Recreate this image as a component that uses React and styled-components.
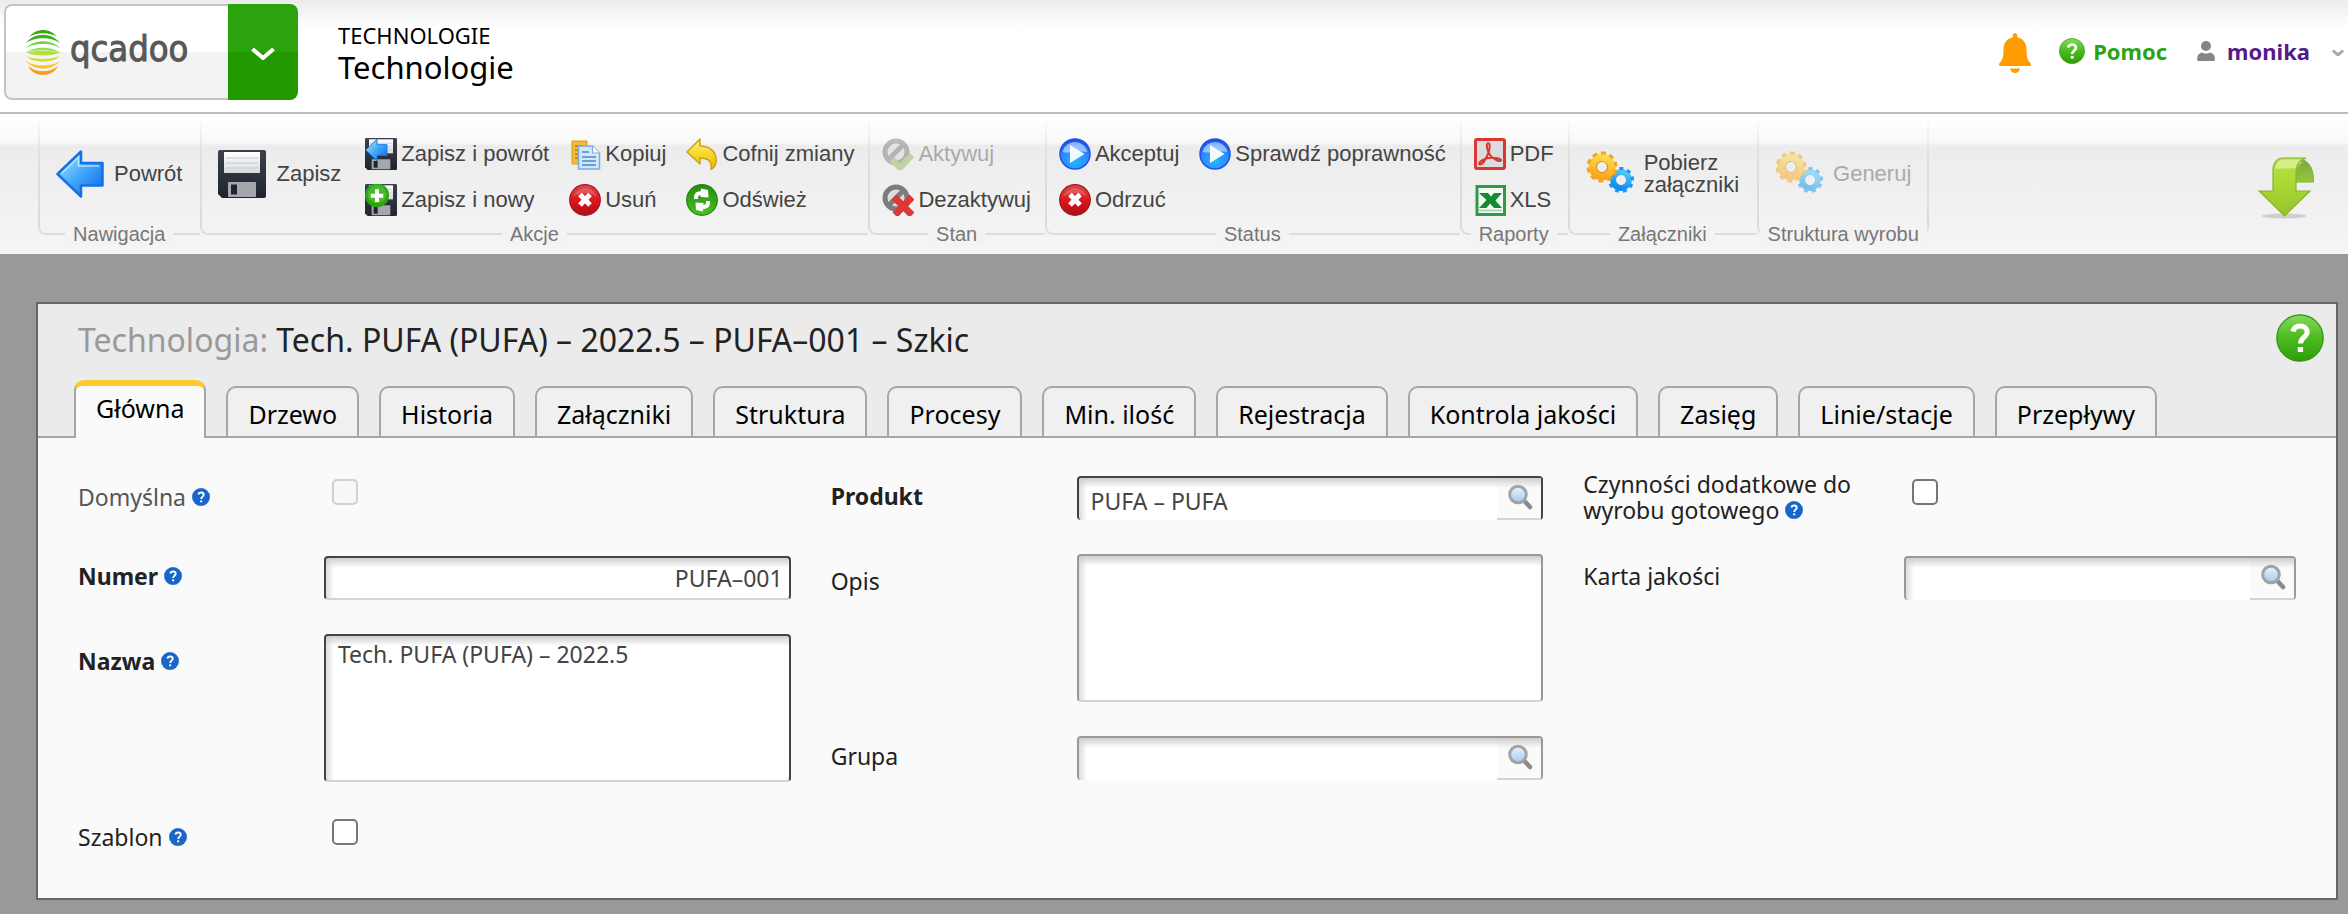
import React from "react";
import styled, { createGlobalStyle, css } from "styled-components";

const GlobalStyle = createGlobalStyle`
  *, *::before, *::after { box-sizing: border-box; }
  body {
    margin: 0;
    background: #999;
    font-family: "Noto Sans", "Open Sans", sans-serif;
    font-size: 22px;
    color: #222;
  }
  button, input, textarea { font: inherit; color: inherit; margin: 0; }
  svg { display: block; flex: none; }
`;

/* ---------- Icons ---------- */

const Hidden = styled.svg`
  position: absolute;
  width: 0;
  height: 0;
`;

const Gradient = ({ id, stops }) => (
  <linearGradient id={id} x1="0" y1="0" x2="0" y2="1">
    {stops.map((c, i) => (
      <stop key={i} offset={i / (stops.length - 1)} stopColor={c} />
    ))}
  </linearGradient>
);

const IconDefs = () => (
  <Hidden aria-hidden="true">
    <defs>
      <linearGradient id="arrowBlue" x1="0" y1="0" x2="1" y2="1">
        <stop offset="0" stopColor="#b5ecff" />
        <stop offset="0.5" stopColor="#43a9fb" />
        <stop offset="1" stopColor="#0a5fe6" />
      </linearGradient>
      <radialGradient id="playBlue" cx="0.5" cy="0.75" r="0.75">
        <stop offset="0" stopColor="#23b4ff" />
        <stop offset="0.6" stopColor="#2c8bff" />
        <stop offset="1" stopColor="#1748e8" />
      </radialGradient>
      <Gradient id="discDark" stops={["#3b414d", "#20242d"]} />
      <Gradient id="discPaper" stops={["#ffffff", "#d8dadd"]} />
      <Gradient id="ballGreen" stops={["#86d95f", "#4cbb1f", "#2f9b0c"]} />
      <Gradient id="ballRed" stops={["#d9474c", "#e0161c", "#a90e17"]} />
      <Gradient id="ballRefresh" stops={["#2c8a14", "#37a51b", "#46c41f"]} />
      <Gradient id="undoYellow" stops={["#fff27a", "#f7d92b", "#e3b010"]} />
      <Gradient id="glass" stops={["#e8f4ff", "#9fcbf5"]} />
      <Gradient id="gearGold" stops={["#ffd84a", "#fca61c"]} />
      <Gradient id="gearBlue" stops={["#4fc4f6", "#0c8cf0"]} />
      <Gradient id="arrowLime" stops={["#b7e14a", "#a9d733", "#97c22c"]} />
      <Gradient id="arrowLimeDark" stops={["#7aa53e", "#94c93c"]} />
    </defs>
  </Hidden>
);

const QcadooMark = () => (
  <svg width="34" height="46" viewBox="0 0 34 46" fill="none" strokeLinecap="butt">
    <path d="M3 8C10-1.500 24-1.500 31 8 24 3 10 3 3 8Z" fill="#3aa816" />
    <path d="M0 14C8 3 26 3 34 14 26 7.500 8 7.500 0 14Z" fill="#3fae1d" />
    <path d="M0 19C8 10 26 10 34 19 26 13.500 8 13.500 0 19Z" fill="#6fd349" />
    <path d="M0 23.500C8 17 26 17 34 23.500 26 20.500 8 20.500 0 23.500Z" fill="#93df4a" />
    <path d="M0 23.500C8 27.500 26 27.500 34 23.500 26 21 8 21 0 23.500Z" fill="#b4e03c" />
    <path d="M0 27C8 34.500 26 34.500 34 27 26 31 8 31 0 27Z" fill="#d4d92a" />
    <path d="M0 32C8 42 26 42 34 32 26 38 8 38 0 32Z" fill="#fbc418" />
    <path d="M2 37C8 49 26 49 32 37 24 44 10 44 2 37Z" fill="#fb9a1c" />
  </svg>
);

const Chevron = ({ size = 24, color = "#fff", width = 4 }) => (
  <svg width={size} height={size / 2} viewBox="0 0 24 12" fill="none" stroke={color} strokeWidth={width}>
    <path d="M1.500 1 12 10 22.500 1" />
  </svg>
);

const BellIcon = () => (
  <svg width="32" height="40" viewBox="0 0 32 40" fill="#ff9c00">
    <path d="M16 0c1.300 0 2.200 1 2.200 2.200v2C24 5.500 27.500 10 27.500 16c0 8 .8 11 3.800 14 1.300 1.400.7 3-1 3H1.700c-1.700 0-2.300-1.600-1-3 3-3 3.800-6 3.800-14C4.500 10 8 5.500 13.800 4.200v-2C13.800 1 14.700 0 16 0Z" />
    <path d="M11 35.500h10c-.6 2.600-2.400 4.500-5 4.500s-4.400-1.900-5-4.500Z" />
  </svg>
);

const BallHelp = ({ size, fill = "url(#ballGreen)", rim = "#2e9612" }) => (
  <svg width={size} height={size} viewBox="0 0 48 48">
    <circle cx="24" cy="24" r="23.200" fill={fill} stroke={rim} strokeWidth="1.200" />
    <path
      d="M17 17.500c1-4 4-5.500 7.200-5.500 4 0 7 2.200 7 6 0 5-6.700 5.400-6.700 11.500"
      fill="none"
      stroke="#fff"
      strokeWidth="5"
    />
    <rect x="21.700" y="33" width="5.400" height="5" fill="#fff" />
  </svg>
);

const PersonIcon = () => (
  <svg width="18" height="20" viewBox="0 0 18 20" fill="#858585">
    <circle cx="9" cy="5" r="5" />
    <path d="M1 20C-.3 20 0 15 1.500 13.500 2.500 12.200 4 12 5 11.500c2 1.300 6 1.300 8 0 1 .5 2.500.7 3.500 2C18 15 18.300 20 17 20Z" />
  </svg>
);

const BackArrowIcon = () => (
  <svg width="48" height="48" viewBox="0 0 48 48">
    <path d="M1.500 24 25 1.500V13H46.500V35.500H25V46.500Z" fill="url(#arrowBlue)" stroke="#1470ec" strokeWidth="2.500" strokeLinejoin="round" />
    <path d="M5.500 23.500 22.500 7V16H43" fill="none" stroke="#c3f0ff" strokeWidth="1.500" opacity=".8" />
  </svg>
);

const Disc = () => (
  <>
    <path d="M2 0H46a2 2 0 0 1 2 2V46a2 2 0 0 1-2 2H4L0 44V2A2 2 0 0 1 2 0Z" fill="url(#discDark)" />
    <rect x="6" y="2" width="36" height="21" fill="url(#discPaper)" />
    <path d="M8 8H40M8 13H40M8 18H40" stroke="#c6c8cc" strokeWidth="1" />
    <rect x="10" y="32" width="28" height="15" rx="1" fill="#a5a7ac" />
    <rect x="13" y="34.500" width="6" height="10" fill="#20242d" />
  </>
);

const DiscIcon = () => (
  <svg width="48" height="48" viewBox="0 0 48 48">
    <Disc />
  </svg>
);

const DiscBackIcon = () => (
  <svg width="32" height="32" viewBox="0 0 48 48">
    <Disc />
    <path d="M1 18 18 2V10H33V26H18V34Z" fill="url(#arrowBlue)" stroke="#1a7fe8" strokeWidth="1.500" />
  </svg>
);

const DiscNewIcon = () => (
  <svg width="32" height="32" viewBox="0 0 48 48">
    <Disc />
    <circle cx="18" cy="17" r="18" fill="#2ca514" />
    <circle cx="18" cy="15" r="14" fill="#5cc63a" opacity=".6" />
    <path d="M18 8V27M8.500 17.500H27.500" stroke="#fff" strokeWidth="6" />
  </svg>
);

const CopyIcon = () => (
  <svg width="32" height="32" viewBox="0 0 32 32">
    <path d="M3 3H18V26H3Z" fill="#f3bc34" stroke="#d99b1d" />
    <path d="M6 8H14M6 12H12M6 16H12M6 20H12" stroke="#b97b10" strokeWidth="1.500" />
    <path d="M9.500 8H23.500L30.500 15V31H9.500Z" fill="#d3e7fa" stroke="#78acdf" strokeWidth="1.500" />
    <path d="M23.500 8V15H30.500" fill="#fff" stroke="#78acdf" strokeWidth="1.200" />
    <path d="M13 14H20M13 19H27M13 23H27M13 27H27" stroke="#6e9fd2" strokeWidth="1.800" />
  </svg>
);

const DeleteIcon = () => (
  <svg width="32" height="32" viewBox="0 0 32 32">
    <circle cx="16" cy="16" r="15.300" fill="url(#ballRed)" stroke="#9a1c22" strokeWidth="1.200" />
    <path d="M4 13a12.500 12.500 0 0 1 24 0C22 8 10 8 4 13Z" fill="#fff" opacity=".18" />
    <path d="M11 10.500 21 21M21 10.500 11 21" stroke="#fff" strokeWidth="5" />
  </svg>
);

const UndoIcon = () => (
  <svg width="32" height="32" viewBox="0 0 32 32">
    <path
      d="M1 14 14 1V8C25 8 31 15 30 24 29.500 28 28 30 25 31.500 26 24 23 20 14 20V26Z"
      fill="url(#undoYellow)"
      stroke="#cf9f16"
      strokeWidth="1.500"
      strokeLinejoin="round"
    />
  </svg>
);

const RefreshIcon = () => (
  <svg width="32" height="32" viewBox="0 0 32 32">
    <circle cx="16" cy="16" r="15.300" fill="url(#ballRefresh)" stroke="#23840f" strokeWidth="1.200" />
    <path d="M10 15V13C10 10.500 12 9 16 9M22 17V19C22 21.500 20 23 16 23" fill="none" stroke="#fff" strokeWidth="4" />
    <path d="M15 4.500 22 6 22.500 13.500 14.500 13ZM17 27.500 10 26 9.500 18.500 17.500 19Z" fill="#fff" />
  </svg>
);

const Forbidden = () => (
  <>
    <circle cx="14" cy="14" r="11" fill="#dcdcdc" stroke="#7c7c7c" strokeWidth="5" />
    <path d="M6.500 21.500 21.500 6.500" stroke="#7c7c7c" strokeWidth="5" />
  </>
);

const ActivateIcon = () => (
  <svg width="32" height="32" viewBox="0 0 32 32" opacity=".5">
    <Forbidden />
    <path d="M10 21 18 30 30 17" fill="none" stroke="#8fbe5a" strokeWidth="6" />
  </svg>
);

const DeactivateIcon = () => (
  <svg width="32" height="32" viewBox="0 0 32 32">
    <Forbidden />
    <path d="M12 13 30 31M30 13 13 31" stroke="#dd3835" strokeWidth="7" />
  </svg>
);

const PlayIcon = () => (
  <svg width="32" height="32" viewBox="0 0 32 32">
    <circle cx="16" cy="16" r="15" fill="url(#playBlue)" stroke="#2350ea" strokeWidth="1.500" />
    <path d="M3.500 14a12.800 12.800 0 0 1 25 0C21 12 11 16 3.500 14Z" fill="#fff" opacity=".5" />
    <path d="M11 7 25.500 16 11 25Z" fill="#f4fbff" />
  </svg>
);

const PdfIcon = () => (
  <svg width="32" height="32" viewBox="0 0 32 32">
    <rect x="1.500" y="1.500" width="29" height="29" rx="1.500" fill="#dcdcdc" stroke="#d9372f" strokeWidth="3" />
    <path
      d="M13.500 5.500C16 4.500 16.500 9 14.500 15 12 21 8 27 5.500 26.500 3.500 25 9 20.500 15 20 21 19.500 27.500 20.500 27 22.500 26 24.500 19 21 16 17 13 12 12 7 13.500 5.500Z"
      fill="none"
      stroke="#d9372f"
      strokeWidth="2"
    />
  </svg>
);

const XlsIcon = () => (
  <svg width="32" height="32" viewBox="0 0 32 32">
    <rect x="3" y="2.500" width="27.500" height="28" fill="#f4faf4" stroke="#2f9a48" strokeWidth="3" />
    <path d="M5 9H14L17 12.500 20 9H28L21.500 16.500 28 24H20L16 19.500 12.500 24H5L12.500 16Z" fill="#158a35" />
    <path d="M5 26.500H28" stroke="#9dcfa6" strokeWidth="1.500" />
  </svg>
);

const GearsIcon = ({ faded }) => (
  <svg width="48" height="48" viewBox="0 0 48 48" opacity={faded ? 0.5 : 1}>
    <g transform="translate(35 30) rotate(20)">
      <circle r="8" fill="none" stroke="url(#gearBlue)" strokeWidth="6" />
      <circle r="11.500" fill="none" stroke="#1b96ee" strokeWidth="3" strokeDasharray="4 4.030" />
    </g>
    <g transform="translate(16 17) rotate(12)">
      <circle r="9.500" fill="none" stroke="url(#gearGold)" strokeWidth="8" />
      <circle r="14" fill="none" stroke="#f3a51d" strokeWidth="3" strokeDasharray="4.800 4" />
      <circle r="5.500" fill="none" stroke="#cf8d1c" strokeWidth="1" />
    </g>
  </svg>
);

const CollapseIcon = () => (
  <svg width="56" height="62" viewBox="0 0 56 62">
    <ellipse cx="26" cy="59" rx="22" ry="2.500" fill="#000" opacity=".14" />
    <path d="M30 3C48-2 56 8 55.500 25H38C38 14 40 6 46 5Z" fill="url(#arrowLimeDark)" stroke="#86b32e" />
    <path
      d="M1 34H15V14C15 6 19 1 25 1H48C41 3 38 9 38 16V34H52L26.500 59Z"
      fill="url(#arrowLime)"
      stroke="#86b32e"
      strokeWidth="1.200"
    />
    <path d="M17 12C18 6 21 3 25 2.500H44C40 4 38 8 37.500 11Z" fill="#e2f6a6" opacity=".7" />
  </svg>
);

const SearchIcon = () => (
  <svg width="26" height="26" viewBox="0 0 26 26">
    <path d="M16.500 16 23 23" stroke="#8a8a8a" strokeWidth="4.500" strokeLinecap="round" />
    <circle cx="11" cy="10.500" r="8.300" fill="url(#glass)" stroke="#a3a3a3" strokeWidth="3" />
  </svg>
);

/* ---------- Top bar ---------- */

const TopBar = styled.header`
  display: flex;
  align-items: flex-start;
  min-height: 114px;
  padding: 4px 4px 0;
  border-bottom: 2px solid #bbb;
  background: linear-gradient(#ececec, #fff 28px);
`;

const Brand = styled.div`
  display: flex;
  height: 96px;
`;

const BrandLink = styled.a`
  display: flex;
  align-items: center;
  width: 224px;
  padding-left: 20px;
  gap: 10px;
  border: 2px solid #c4c4c4;
  border-right: 0;
  border-radius: 8px 0 0 8px;
  background: linear-gradient(#fff 50%, #f3f3f3 50%);
  color: #585858;
  font-family: "DejaVu Sans Condensed", "DejaVu Sans", sans-serif;
  font-size: 36px;
  line-height: 44px;
  text-decoration: none;
`;

const BrandName = styled.span`
  padding-bottom: 6px;
  -webkit-text-stroke: 1px #585858;
`;

const MenuToggle = styled.button`
  display: flex;
  align-items: center;
  justify-content: center;
  width: 70px;
  padding: 4px 0 0;
  border: 0;
  border-radius: 0 8px 8px 0;
  background: linear-gradient(#2aa30c 50%, #219a02 50%);
`;

const PageHeading = styled.div`
  margin-left: 40px;
  padding-top: 18px;
  color: #000;
`;

const Breadcrumb = styled.div`
  font-size: 22px;
  line-height: 26px;
`;

const PageTitle = styled.h1`
  margin: 0;
  font-size: 31px;
  font-weight: 400;
  line-height: 38px;
`;

const UserArea = styled.nav`
  display: flex;
  align-items: center;
  margin-left: auto;
  height: 96px;
  padding-top: 2px;
`;

const BellButton = styled.button`
  margin-right: 28px;
  padding: 0;
  border: 0;
  background: none;
`;

const UserLink = styled.a`
  display: flex;
  align-items: center;
  gap: ${(p) => p.$gap || 8}px;
  margin-right: ${(p) => p.$after || 0}px;
  padding-bottom: 4px;
  color: ${(p) => p.$color};
  font-weight: 700;
  line-height: 30px;
  text-decoration: none;
`;

/* ---------- Ribbon ---------- */

const RibbonBar = styled.div`
  display: flex;
  min-height: 140px;
  padding: 0 34px 0 38px;
  background: linear-gradient(#fff, #f9f9f9 28px, #ececec 32px, #f5f5f5);
  font-family: "Liberation Sans", Arial, sans-serif;
`;

const Group = styled.section`
  position: relative;
  display: flex;
  flex-direction: column;
  align-items: center;
  padding: 24px 14px 9px;

  &::before {
    content: "";
    position: absolute;
    inset: 4px 0 19px;
    border: solid #dcdcdc;
    border-width: 0 0 2px 2px;
    border-radius: 0 0 0 8px;
    mask-image: linear-gradient(transparent, #000 50px);
    pointer-events: none;
  }

  &:last-of-type::before {
    border-right-width: 2px;
    border-radius: 0 0 8px 8px;
  }
`;

const GroupBody = styled.div`
  display: flex;
  flex: 1;
  gap: 20px;
`;

const GroupCaption = styled.div`
  position: relative;
  margin: 0 -12px;
  padding: 0 8px;
  background: #f3f3f3;
  color: #777;
  font-size: 20px;
  line-height: 22px;
  white-space: nowrap;
`;

const ItemColumn = styled.div`
  display: flex;
  flex-direction: column;
  gap: 14px;
`;

const SmallButton = styled.button`
  display: flex;
  align-items: center;
  gap: 4px;
  height: 32px;
  padding: 0;
  border: 0;
  background: none;
  color: #444;
  line-height: 32px;
  white-space: nowrap;
  &:disabled { color: #aaa; }
`;

const LargeButton = styled(SmallButton)`
  gap: 10px;
  height: 72px;
  padding: 0 4px;
  line-height: 22px;
  text-align: left;
  white-space: pre-line;
`;

const CollapseButton = styled.button`
  align-self: flex-start;
  margin: 43px 0 0 auto;
  padding: 0;
  border: 0;
  background: none;
`;

const ribbon = [
  { caption: "Nawigacja", large: { text: "Powrót", icon: <BackArrowIcon /> } },
  {
    caption: "Akcje",
    large: { text: "Zapisz", icon: <DiscIcon /> },
    columns: [
      [
        { text: "Zapisz i powrót", icon: <DiscBackIcon /> },
        { text: "Zapisz i nowy", icon: <DiscNewIcon /> },
      ],
      [
        { text: "Kopiuj", icon: <CopyIcon /> },
        { text: "Usuń", icon: <DeleteIcon /> },
      ],
      [
        { text: "Cofnij zmiany", icon: <UndoIcon /> },
        { text: "Odśwież", icon: <RefreshIcon /> },
      ],
    ],
  },
  {
    caption: "Stan",
    columns: [
      [
        { text: "Aktywuj", icon: <ActivateIcon />, disabled: true },
        { text: "Dezaktywuj", icon: <DeactivateIcon /> },
      ],
    ],
  },
  {
    caption: "Status",
    columns: [
      [
        { text: "Akceptuj", icon: <PlayIcon /> },
        { text: "Odrzuć", icon: <DeleteIcon /> },
      ],
      [{ text: "Sprawdź poprawność", icon: <PlayIcon /> }],
    ],
  },
  {
    caption: "Raporty",
    columns: [
      [
        { text: "PDF", icon: <PdfIcon /> },
        { text: "XLS", icon: <XlsIcon /> },
      ],
    ],
  },
  { caption: "Załączniki", large: { text: "Pobierz\nzałączniki", icon: <GearsIcon /> } },
  { caption: "Struktura wyrobu", large: { text: "Generuj", icon: <GearsIcon faded />, disabled: true } },
];

const Ribbon = () => (
  <RibbonBar>
    {ribbon.map(({ caption, large, columns = [] }) => (
      <Group key={caption}>
        <GroupBody>
          {large && (
            <LargeButton type="button" disabled={large.disabled}>
              {large.icon}
              {large.text}
            </LargeButton>
          )}
          {columns.map((items, i) => (
            <ItemColumn key={i}>
              {items.map((item) => (
                <SmallButton key={item.text} type="button" disabled={item.disabled}>
                  {item.icon}
                  {item.text}
                </SmallButton>
              ))}
            </ItemColumn>
          ))}
        </GroupBody>
        <GroupCaption>{caption}</GroupCaption>
      </Group>
    ))}
    <CollapseButton type="button" aria-label="Zwiń">
      <CollapseIcon />
    </CollapseButton>
  </RibbonBar>
);

/* ---------- Window panel ---------- */

const Workspace = styled.main`
  padding: 48px 10px 14px 36px;
`;

const Panel = styled.div`
  border: 2px solid #666;
  background: #fafafa;
`;

const PanelHead = styled.div`
  display: flex;
  flex-direction: column;
  border-bottom: 2px solid #a6a6a6;
  background: #ebebeb;
`;

const TitleRow = styled.div`
  display: flex;
  align-items: flex-start;
  justify-content: space-between;
  padding: 10px 12px 0 40px;
  min-height: 76px;
`;

const RecordTitle = styled.h2`
  margin: 6px 0 0;
  font-size: 32px;
  font-weight: 400;
  line-height: 40px;
`;

const Muted = styled.span`
  color: #999;
`;

const HelpButton = styled.button`
  padding: 0;
  border: 0;
  background: none;
`;

const Tabs = styled.div`
  display: flex;
  align-items: flex-end;
  gap: 20px;
  margin-bottom: -2px;
  padding-left: 36px;
`;

const Tab = styled.button`
  height: 52px;
  padding: 4px 20px 0;
  border: 2px solid #a6a6a6;
  border-radius: 10px 10px 0 0;
  background: #f0f0f0;
  color: #000;
  font-size: 25px;
  line-height: 34px;
  white-space: nowrap;

  ${(p) =>
    p.$active &&
    css`
      height: 58px;
      padding: 0 20px 8px;
      border-top: 6px solid #ffca30;
      border-bottom: 0;
      background: #fafafa;
    `}
`;

const tabs = [
  "Główna", "Drzewo", "Historia", "Załączniki", "Struktura", "Procesy",
  "Min. ilość", "Rejestracja", "Kontrola jakości", "Zasięg", "Linie/stacje", "Przepływy",
];

/* ---------- Form ---------- */

const FormGrid = styled.form`
  display: grid;
  grid-template-columns: repeat(3, minmax(0, 1fr));
  gap: 40px;
  padding: 38px 40px 36px;
  font-size: 23px;
`;

const FormColumn = styled.div`
  display: flex;
  flex-direction: column;
  gap: 34px;
`;

const FieldRow = styled.div`
  display: grid;
  grid-template-columns: ${(p) => p.$columns || "246fr 467fr"};
  grid-template-rows: ${(p) => (p.$check ? "46px" : "auto")};
  align-items: ${(p) => (p.$tall ? "start" : "center")};
`;

const Label = styled.label`
  padding-top: ${(p) => (p.$tall ? 14 : 0)}px;
  padding-bottom: 4px;
  color: ${(p) => (p.$muted ? "#555" : "#222")};
  font-weight: ${(p) => (p.$required ? 700 : 400)};
  line-height: 26px;
`;

const Hint = styled.span`
  display: inline-block;
  margin-left: 6px;
`;

const fieldFrame = css`
  border: 2px solid ${(p) => (p.$required ? "#444" : "#999")};
  border-radius: 4px;
  background:
    linear-gradient(#cfcfcf, transparent) top / 100% 10px no-repeat,
    linear-gradient(90deg, #ddd, transparent) left / 8px 100% no-repeat,
    #fff;
`;

const TextInput = styled.input`
  ${fieldFrame}
  width: 100%;
  min-width: 0;
  height: 44px;
  padding: 0 6px;
  border-bottom-color: #d4d4d4;
  color: #444;
  text-align: right;
`;

const TextArea = styled.textarea`
  ${fieldFrame}
  display: block;
  width: 100%;
  height: 148px;
  padding: 4px 12px;
  border-bottom-color: #d4d4d4;
  color: #444;
  line-height: 28px;
  resize: none;
`;

const LookupFrame = styled.div`
  ${fieldFrame}
  display: flex;
  height: 44px;
  border-bottom: 0;
`;

const LookupInput = styled.input`
  flex: 1;
  min-width: 0;
  padding: 4px 0 0 12px;
  border: 0;
  background: none;
  color: #444;
`;

const LookupButton = styled.button`
  display: flex;
  align-items: center;
  justify-content: center;
  width: 44px;
  padding: 0 0 2px 2px;
  border: 0;
  border-bottom: 2px solid #d4d4d4;
  background: linear-gradient(#cfcfcf, #fafafa 10px);
`;

const Checkbox = styled.input`
  appearance: none;
  width: 26px;
  height: 26px;
  margin: 0 0 14px 8px;
  border: 2px solid #767676;
  border-radius: 5px;
  background: #fff;
  &:disabled { border-color: #d0d0d0; background: #f8f8f8; }
`;

const fields = [
  [
    { id: "domyslna", label: "Domyślna", type: "check", hint: true, disabled: true },
    { id: "numer", label: "Numer", type: "text", hint: true, required: true, value: "PUFA–001" },
    { id: "nazwa", label: "Nazwa", type: "area", hint: true, required: true, value: "Tech. PUFA (PUFA) – 2022.5" },
    { id: "szablon", label: "Szablon", type: "check", hint: true },
  ],
  [
    { id: "produkt", label: "Produkt", type: "lookup", required: true, value: "PUFA – PUFA" },
    { id: "opis", label: "Opis", type: "area" },
    { id: "grupa", label: "Grupa", type: "lookup" },
  ],
  [
    { id: "czynnosci", label: "Czynności dodatkowe do wyrobu gotowego", type: "check", hint: true },
    { id: "karta", label: "Karta jakości", type: "lookup" },
  ],
];

const Control = ({ id, type, value = "", required, disabled }) => {
  if (type === "check") return <Checkbox id={id} type="checkbox" disabled={disabled} />;
  if (type === "area") return <TextArea id={id} defaultValue={value} $required={required} />;
  if (type === "text") return <TextInput id={id} defaultValue={value} $required={required} />;
  return (
    <LookupFrame $required={required}>
      <LookupInput id={id} defaultValue={value} />
      <LookupButton type="button" aria-label="Szukaj">
        <SearchIcon />
      </LookupButton>
    </LookupFrame>
  );
};

const Field = ({ field, columns }) => {
  const tall = field.type === "area";
  return (
    <FieldRow $tall={tall} $check={field.type === "check"} $columns={columns}>
      <Label htmlFor={field.id} $tall={tall} $required={field.required} $muted={field.disabled}>
        {field.label}
        {field.hint && (
          <Hint>
            <BallHelp size={18} fill="#1767cb" rim="#1257b4" />
          </Hint>
        )}
      </Label>
      <Control {...field} />
    </FieldRow>
  );
};

export default function App() {
  return (
    <>
      <GlobalStyle />
      <IconDefs />
      <TopBar>
        <Brand>
          <BrandLink href="#">
            <QcadooMark />
            <BrandName>qcadoo</BrandName>
          </BrandLink>
          <MenuToggle type="button" aria-label="Menu">
            <Chevron />
          </MenuToggle>
        </Brand>
        <PageHeading>
          <Breadcrumb>TECHNOLOGIE</Breadcrumb>
          <PageTitle>Technologie</PageTitle>
        </PageHeading>
        <UserArea>
          <BellButton type="button" aria-label="Powiadomienia">
            <BellIcon />
          </BellButton>
          <UserLink href="#" $color="#2aa314" $after={30}>
            <BallHelp size={26} />
            Pomoc
          </UserLink>
          <UserLink href="#" $color="#551a8b" $gap={12} $after={22}>
            <PersonIcon />
            monika
          </UserLink>
          <Chevron size={12} color="#aaa" width={6} />
        </UserArea>
      </TopBar>
      <Ribbon />
      <Workspace>
        <Panel>
          <PanelHead>
            <TitleRow>
              <RecordTitle>
                <Muted>Technologia:</Muted> Tech. PUFA (PUFA) – 2022.5 – PUFA–001 – Szkic
              </RecordTitle>
              <HelpButton type="button" aria-label="Pomoc">
                <BallHelp size={48} />
              </HelpButton>
            </TitleRow>
            <Tabs role="tablist">
              {tabs.map((name, i) => (
                <Tab key={name} type="button" role="tab" aria-selected={i === 0} $active={i === 0}>
                  {name}
                </Tab>
              ))}
            </Tabs>
          </PanelHead>
          <FormGrid>
            {fields.map((column, i) => (
              <FormColumn key={i}>
                {column.map((field) => (
                  <Field key={field.id} field={field} columns={i === 2 ? "321fr 392fr" : undefined} />
                ))}
              </FormColumn>
            ))}
          </FormGrid>
        </Panel>
      </Workspace>
    </>
  );
}
